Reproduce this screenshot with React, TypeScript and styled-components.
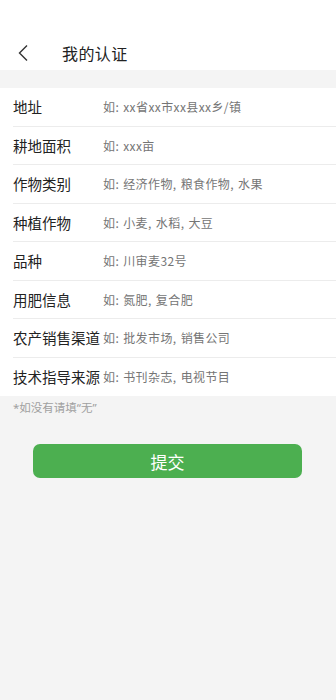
import React from 'react';
import styled, { createGlobalStyle } from 'styled-components';

const fields: { label: string, hint: string }[] = [
  { label: '地址', hint: '如: xx省xx市xx县xx乡/镇' },
  { label: '耕地面积', hint: '如: xxx亩' },
  { label: '作物类别', hint: '如: 经济作物, 粮食作物, 水果' },
  { label: '种植作物', hint: '如: 小麦, 水稻, 大豆' },
  { label: '品种', hint: '如: 川审麦32号' },
  { label: '用肥信息', hint: '如: 氮肥, 复合肥' },
  { label: '农产销售渠道', hint: '如: 批发市场, 销售公司' },
  { label: '技术指导来源', hint: '如: 书刊杂志, 电视节目' },
];

export default function App() {
  return (
    <Page>
      <GlobalStyle />
      <Header>
        <BackButton>
          <svg width="12" height="18" viewBox="0 0 12 18">
            <path d="M10 1.5 L2.5 9 L10 16.5" fill="none" stroke="#333" strokeWidth="1.4" />
          </svg>
        </BackButton>
        <Title>我的认证</Title>
      </Header>
      <Spacer />
      <Form>
        {fields.map((f, i) => (
          <Row key={f.label} lastItem={i === fields.length - 1}>
            <Label>{f.label}</Label>
            <Input placeholder={f.hint} />
          </Row>
        ))}
      </Form>
      <Note>*如没有请填“无”</Note>
      <SubmitButton>提交</SubmitButton>
    </Page>
  );
}

const GlobalStyle = createGlobalStyle`
  html, body {
    margin: 0;
    padding: 0;
    background: #f4f4f4;
  }
  * {
    box-sizing: border-box;
  }
`;

const Page = styled.div`
  width: 336px;
  min-height: 700px;
  background: #f4f4f4;
  font-family: "Noto Sans CJK SC", "Noto Sans", sans-serif;
  display: flex;
  flex-direction: column;
`;

const Header = styled.div`
  height: 70px;
  background: #ffffff;
  display: flex;
  align-items: flex-end;
  padding: 0 0 5px 17px;
`;

const BackButton = styled.div`
  width: 14px;
  height: 24px;
  display: flex;
  align-items: center;
  margin-right: 31px;
`;

const Title = styled.div`
  font-size: 16px;
  color: #222;
  line-height: 24px;
  letter-spacing: 0.4px;
`;

const Spacer = styled.div`
  height: 18px;
`;

const Form = styled.div`
  background: #ffffff;
`;

const Row = styled.div<{ lastItem: boolean }>`
  height: 38.5px;
  margin-left: 13px;
  display: flex;
  align-items: center;
  border-bottom: 1px solid ${(props) => props.lastItem ? 'transparent' : '#ececec'};
`;

const Label = styled.div`
  width: 90px;
  flex-shrink: 0;
  font-size: 14.5px;
  color: #222;
  white-space: nowrap;
`;

const Input = styled.input`
  flex: 1;
  min-width: 0;
  border: none;
  outline: none;
  background: transparent;
  font-family: inherit;
  font-size: 12px;
  letter-spacing: 0.4px;
  word-spacing: 1px;
  color: #333;
  padding: 0;

  ::placeholder {
    color: #8c8c8c;
  }
`;

const Note = styled.div`
  font-family: "Noto Sans", "Noto Sans CJK SC", sans-serif;
  font-size: 11.5px;
  color: #a0a0a0;
  padding: 4px 13px 0;
  line-height: 16px;
`;

const SubmitButton = styled.button`
  margin: 28px 0 0 33px;
  width: 269px;
  height: 34px;
  border: none;
  border-radius: 7px;
  background: #4caf50;
  color: #ffffff;
  font-family: inherit;
  font-size: 17px;
  cursor: pointer;
`;
